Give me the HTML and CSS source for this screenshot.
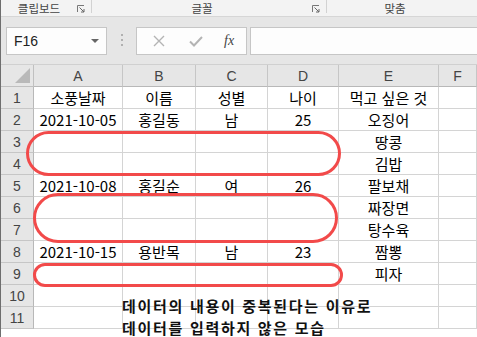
FILE: index.html
```html
<!DOCTYPE html>
<html lang="ko">
<head>
<meta charset="UTF-8">
<title>중복 데이터</title>
<link rel="stylesheet" href="styles.css">
</head>
<body>
<div class="app">
    <!-- 리본 그룹 이름 -->
    <div class="ribbon">
        <div class="group g1">
            <span class="glabel">클립보드</span>
            <svg class="launcher" width="8" height="8" viewBox="0 0 8 8"><path d="M0.5 7V0.5H7" fill="none" stroke="#777"/><path d="M2.5 2.5L7 7M7 4V7H4" fill="none" stroke="#666"/></svg>
        </div>
        <div class="group g2">
            <span class="glabel">글꼴</span>
            <svg class="launcher" width="8" height="8" viewBox="0 0 8 8"><path d="M0.5 7V0.5H7" fill="none" stroke="#777"/><path d="M2.5 2.5L7 7M7 4V7H4" fill="none" stroke="#666"/></svg>
        </div>
        <div class="group g3">
            <span class="glabel">맞춤</span>
        </div>
    </div>

    <!-- 이름 상자 + 수식 입력줄 -->
    <div class="fbar">
        <div class="namebox">
            <span>F16</span>
            <span class="drop"></span>
        </div>
        <div class="dots"><i></i><i></i><i></i></div>
        <div class="fxbox">
            <svg width="12" height="12" viewBox="0 0 12 12"><path d="M1 1L11 11M11 1L1 11" stroke="#b4b4b4" stroke-width="1.4"/></svg>
            <svg width="14" height="12" viewBox="0 0 14 12"><path d="M1 6.5L5 10.5L13 2" fill="none" stroke="#b4b4b4" stroke-width="2"/></svg>
            <span class="fx">fx</span>
        </div>
        <div class="formula"></div>
    </div>

    <!-- 시트 -->
    <div class="sheet">
        <div class="corner"><svg width="15" height="15" viewBox="0 0 15 15"><path d="M15 0V15H0Z" fill="#b9b9b9"/></svg></div>
        <div class="ch">A</div><div class="ch">B</div><div class="ch">C</div><div class="ch">D</div><div class="ch">E</div><div class="ch">F</div>

        <div class="rh">1</div><div class="c">소풍날짜</div><div class="c">이름</div><div class="c">성별</div><div class="c">나이</div><div class="c">먹고 싶은 것</div><div class="c"></div>
        <div class="rh">2</div><div class="c">2021-10-05</div><div class="c">홍길동</div><div class="c">남</div><div class="c">25</div><div class="c">오징어</div><div class="c"></div>
        <div class="rh">3</div><div class="c"></div><div class="c"></div><div class="c"></div><div class="c"></div><div class="c">땅콩</div><div class="c"></div>
        <div class="rh">4</div><div class="c"></div><div class="c"></div><div class="c"></div><div class="c"></div><div class="c">김밥</div><div class="c"></div>
        <div class="rh">5</div><div class="c">2021-10-08</div><div class="c">홍길순</div><div class="c">여</div><div class="c">26</div><div class="c">팔보채</div><div class="c"></div>
        <div class="rh">6</div><div class="c"></div><div class="c"></div><div class="c"></div><div class="c"></div><div class="c">짜장면</div><div class="c"></div>
        <div class="rh">7</div><div class="c"></div><div class="c"></div><div class="c"></div><div class="c"></div><div class="c">탕수육</div><div class="c"></div>
        <div class="rh">8</div><div class="c">2021-10-15</div><div class="c">용반목</div><div class="c">남</div><div class="c">23</div><div class="c">짬뽕</div><div class="c"></div>
        <div class="rh">9</div><div class="c"></div><div class="c"></div><div class="c"></div><div class="c"></div><div class="c">피자</div><div class="c"></div>
        <div class="rh">10</div><div class="c"></div><div class="c"></div><div class="c"></div><div class="c"></div><div class="c"></div><div class="c"></div>
        <div class="rh">11</div><div class="c"></div><div class="c"></div><div class="c"></div><div class="c"></div><div class="c"></div><div class="c"></div>
    </div>

    <!-- 빨간 표시와 설명 -->
    <div class="mark m1"></div>
    <div class="mark m2"></div>
    <div class="mark m3"></div>
    <div class="note">
        <div>데이터의 내용이 중복된다는 이유로</div>
        <div>데이터를 입력하지 않은 모습</div>
    </div>
</div>
</body>
</html>
```

FILE: styles.css
```css
body {
    margin: 0;
    background: #ffffff;
    font-family: "Noto Sans CJK KR", "Noto Sans", sans-serif;
    color: #000;
}

.app {
    position: relative;
    width: 476px;
    height: 337px;
    overflow: hidden;
    border-left: 1px solid #6e6e6e;
}

/* 리본 */
.ribbon {
    display: flex;
    height: 16px;
    background: #f3f3f3;
    border-bottom: 1px solid #d6d6d6;
}

.group {
    display: flex;
    align-items: flex-start;
    height: 13px;
    border-right: 1px solid #d2d2d2;
}

.g1 { width: 96px; }
.g2 { width: 250px; }
.g3 { width: 160px; border-right: none; }

.glabel {
    flex: 1;
    text-align: center;
    font-size: 11.5px;
    line-height: 16px;
    color: #444;
}

.g3 .glabel { padding-right: 14px; }

.launcher {
    margin-right: 6px;
    margin-top: 5px;
}

/* 수식 입력줄 */
.fbar {
    display: flex;
    align-items: flex-start;
    height: 37px;
    padding-top: 10px;
    background: #e6e6e6;
}

.namebox {
    display: flex;
    align-items: center;
    justify-content: space-between;
    box-sizing: border-box;
    width: 101px;
    height: 28px;
    margin-left: 5px;
    padding: 0 7px 0 7px;
    background: #fdfdfd;
    border: 1px solid #c6c6c6;
    font-family: "Liberation Sans", Arial, sans-serif;
    font-size: 14px;
    color: #222;
}

.drop {
    width: 0;
    height: 0;
    border-left: 4px solid transparent;
    border-right: 4px solid transparent;
    border-top: 4px solid #666;
}

.dots {
    display: flex;
    flex-direction: column;
    gap: 3px;
    width: 2px;
    margin: 7px 13px 0 14px;
}

.dots i {
    display: block;
    width: 2px;
    height: 2px;
    background: #b0b0b0;
}

.fxbox {
    display: flex;
    align-items: center;
    box-sizing: border-box;
    width: 111px;
    height: 28px;
    padding-left: 16px;
    gap: 24px;
    background: #fdfdfd;
    border: 1px solid #c6c6c6;
}

.fx {
    font-family: "Liberation Serif", serif;
    font-style: italic;
    font-size: 14px;
    color: #444;
    margin-left: -3px;
}

.formula {
    box-sizing: border-box;
    flex: 1;
    height: 28px;
    margin-left: 3px;
    background: #fdfdfd;
    border: 1px solid #c6c6c6;
    border-right: none;
}

/* 시트 */
.sheet {
    display: grid;
    grid-template-columns: 33px 89px 73px 72px 71px 100px 38px;
    grid-auto-rows: 22px;
    border-top: 1px solid #d0d0d0;
}

.sheet > div {
    box-sizing: border-box;
    border-right: 1px solid #d4d4d4;
    border-bottom: 1px solid #d4d4d4;
    display: flex;
    align-items: center;
    justify-content: center;
    font-size: 15px;
    white-space: nowrap;
}

.sheet > .corner {
    align-items: flex-end;
    justify-content: flex-end;
    padding: 0 3px 3px 0;
    background: #e6e6e6;
    border-color: #c0c0c0;
}

.sheet > .ch {
    background: #e6e6e6;
    color: #444;
    font-family: "Liberation Sans", Arial, sans-serif;
    font-size: 14px;
    border-right-color: #c6c6c6;
    border-bottom-color: #b8b8b8;
}

.sheet > .rh {
    background: #e6e6e6;
    color: #444;
    font-family: "Liberation Sans", Arial, sans-serif;
    font-size: 14px;
    border-right-color: #b8b8b8;
    border-bottom-color: #c6c6c6;
}

/* 빨간 동그라미 */
.mark {
    position: absolute;
    box-sizing: border-box;
    border: 3px solid #f24a4a;
    border-radius: 999px;
}

.m1 { left: 25px; top: 131px; width: 315px; height: 45px; }
.m2 { left: 32px; top: 193px; width: 305px; height: 50px; }
.m3 { left: 32px; top: 263px; width: 310px; height: 24px; }

.note {
    position: absolute;
    left: 121px;
    top: 295px;
    font-size: 15px;
    font-weight: bold;
    line-height: 22px;
    letter-spacing: 1.7px;
    color: #111;
}

.note div {
    height: 22px;
}
```
